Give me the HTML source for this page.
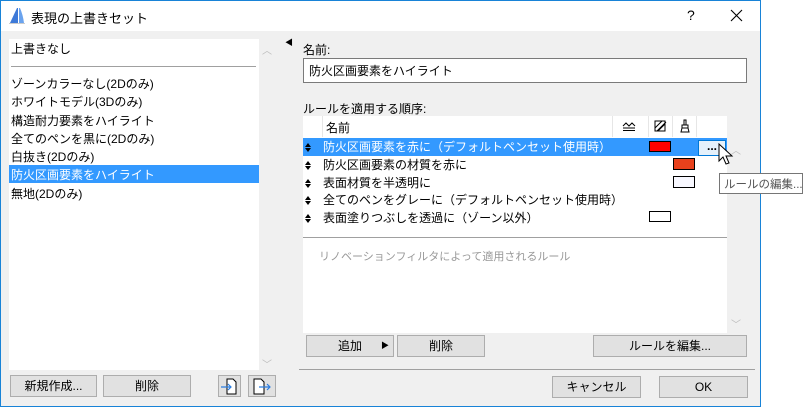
<!DOCTYPE html>
<html><head><meta charset="utf-8"><style>
*{margin:0;padding:0;box-sizing:border-box}
body{width:803px;height:408px;background:#fff;position:relative;overflow:hidden;font-family:"Liberation Sans","Noto Sans CJK JP",sans-serif;font-size:12px;color:#000}
.a{position:absolute}
.win{left:0;top:0;width:761px;height:407px;border:1px solid #1883d7;background:#f0f0f0}
.title{left:1px;top:1px;width:759px;height:30px;background:#fff}
.btn{position:absolute;background:#e1e1e1;border:1px solid #adadad;text-align:center;line-height:20px;font-size:12px}
.row{position:absolute;left:303px;width:424px;height:18px;line-height:18px}
.sw{position:absolute;width:22px;height:11px;border:1px solid #000}
.arr{position:absolute;left:2px;top:5px}
.vl{position:absolute;top:116px;width:1px;height:21px;background:#e6e6e6}
</style></head><body>
<div class="a win"></div>
<div class="a title"></div>
<svg class="a" style="left:9px;top:7px" width="16" height="17"><path d="M1 16 L8 1 L9 1 L9 16Z" fill="#3d79d8"/><path d="M10 1 L11 1 Q14 8 15 16 L10 16Z" fill="#6aa3ee"/><path d="M0 16.5H16" stroke="#ccc"/></svg>
<div class="a" style="left:31px;top:8px;font-size:13px">表現の上書きセット</div>
<div class="a" style="left:687px;top:7px;font-size:14px">?</div>
<svg class="a" style="left:730px;top:9px" width="13" height="13"><path d="M1 1L12 12M12 1L1 12" stroke="#000" stroke-width="1.1"/></svg>

<div class="a" style="left:9px;top:39px;width:250px;height:331px;background:#fff"></div>
<div class="a" style="left:11px;top:40px">上書きなし</div>
<div class="a" style="left:11px;top:66px;width:245px;height:1px;background:#a0a0a0"></div>
<div class="a" style="left:9px;top:165px;width:250px;height:18px;background:#3399ff"></div>
<div class="a" style="left:11px;top:75px;line-height:18.3px">ゾーンカラーなし(2Dのみ)<br>ホワイトモデル(3Dのみ)<br>構造耐力要素をハイライト<br>全てのペンを黒に(2Dのみ)<br>白抜き(2Dのみ)<br><span style="color:#fff">防火区画要素をハイライト</span><br>無地(2Dのみ)</div>
<div class="a" style="left:262px;top:42px;color:#bbb;font-size:10px">︿</div>
<div class="a" style="left:262px;top:356px;color:#bbb;font-size:10px">﹀</div>
<div class="btn" style="left:10px;top:375px;width:87px;height:22px">新規作成...</div>
<div class="btn" style="left:103px;top:375px;width:88px;height:22px">削除</div>
<div class="btn" style="left:218px;top:375px;width:23px;height:22px"><svg width="21" height="20"><path d="M8 3h6l3 3v12H8z" fill="#fff" stroke="#000"/><path d="M2 11h10M9 8l3 3-3 3" stroke="#2a7de1" fill="none" stroke-width="1.2"/></svg></div>
<div class="btn" style="left:248px;top:375px;width:28px;height:22px"><svg width="26" height="20"><path d="M5 3h7l3 3v12H5z" fill="#fff" stroke="#000"/><path d="M10 11h11M18 8l3 3-3 3" stroke="#2a7de1" fill="none" stroke-width="1.2"/></svg></div>
<div class="a" style="left:285px;top:37px;font-size:8px">◀</div>

<div class="a" style="left:303px;top:41px">名前:</div>
<div class="a" style="left:303px;top:58px;width:444px;height:25px;background:#fff;border:1px solid #7a7a7a;padding:3px 5px">防火区画要素をハイライト</div>
<div class="a" style="left:303px;top:100px">ルールを適用する順序:</div>
<div class="a" style="left:303px;top:116px;width:424px;height:217px;background:#fff"></div>
<div class="vl" style="left:322px"></div><div class="vl" style="left:612px"></div><div class="vl" style="left:648px"></div><div class="vl" style="left:672px"></div><div class="vl" style="left:696px"></div>
<div class="a" style="left:326px;top:119px">名前</div>
<svg class="a" style="left:622px;top:120px" width="14" height="12"><path d="M1 6l3-3 3 3 3-3 3 3M1 8h12M1 10.5h12" stroke="#000" fill="none"/></svg>
<svg class="a" style="left:654px;top:120px" width="13" height="12"><rect x="1" y="1" width="10" height="10" fill="none" stroke="#000"/><path d="M1 8l7-7M4 11l7-7M3 11l9-9" stroke="#000"/></svg>
<svg class="a" style="left:680px;top:119px" width="10" height="14"><path d="M4 1h2v5H4zM2 6h6v3H2zM2 9l-1 4h8l-1-4" fill="none" stroke="#000"/></svg>
<div class="a" style="left:303px;top:138px;width:424px;height:18px;background:#3399ff"></div>
<svg width="0" height="0" style="position:absolute"><defs><symbol id="ud" viewBox="0 0 6 9"><path d="M0 4L3 0L6 4ZM0 5L3 9L6 5Z" fill="#000"/></symbol></defs></svg>
<div class="row" style="top:138px;color:#fff"><svg class="arr" width="6" height="9"><use href="#ud"/></svg><span style="position:absolute;left:20px">防火区画要素を赤に（デフォルトペンセット使用時）</span></div>
<div class="row" style="top:156px"><svg class="arr" width="6" height="9"><use href="#ud"/></svg><span style="position:absolute;left:20px">防火区画要素の材質を赤に</span></div>
<div class="row" style="top:174px"><svg class="arr" width="6" height="9"><use href="#ud"/></svg><span style="position:absolute;left:20px">表面材質を半透明に</span></div>
<div class="row" style="top:191px"><svg class="arr" width="6" height="9"><use href="#ud"/></svg><span style="position:absolute;left:20px">全てのペンをグレーに（デフォルトペンセット使用時）</span></div>
<div class="row" style="top:209px"><svg class="arr" width="6" height="9"><use href="#ud"/></svg><span style="position:absolute;left:20px">表面塗りつぶしを透過に（ゾーン以外）</span></div>
<div class="sw" style="left:649px;top:141px;background:#f00"></div>
<div class="sw" style="left:673px;top:158px;background:#e8411c;height:12px"></div>
<div class="sw" style="left:673px;top:176px;background:#f8f8ff;height:12px"></div>
<div class="sw" style="left:649px;top:211px;background:#fff"></div>
<div class="a" style="left:698px;top:140px;width:28px;height:16px;background:#e5f1fb;border:1px solid #0078d7;text-align:center;line-height:10px;font-weight:bold">...</div>
<div class="a" style="left:303px;top:237px;width:424px;height:1px;background:#a0a0a0"></div>
<div class="a" style="left:319px;top:248px;color:#999;font-size:11px">リノベーションフィルタによって適用されるルール</div>
<div class="a" style="left:731px;top:142px;color:#bbb;font-size:10px">︿</div>
<div class="a" style="left:731px;top:316px;color:#bbb;font-size:10px">﹀</div>
<div class="a" style="left:719px;top:173px;width:84px;height:21px;background:#fff;border:1px solid #767676;color:#555;padding:2px 4px;white-space:nowrap;font-size:11.5px">ルールの編集...</div>
<svg class="a" style="left:718px;top:143px" width="16" height="24"><path d="M1 1v17l4-4 3 7 3-1-3-7h6z" fill="#fff" stroke="#000"/></svg>
<div class="btn" style="left:306px;top:335px;width:88px;height:22px">追加<span style="position:absolute;right:4px;font-size:8px">▶</span></div>
<div class="btn" style="left:397px;top:335px;width:88px;height:22px">削除</div>
<div class="btn" style="left:593px;top:335px;width:154px;height:22px">ルールを編集...</div>
<div class="a" style="left:299px;top:369px;width:456px;height:1px;background:#a0a0a0"></div>
<div class="btn" style="left:552px;top:376px;width:89px;height:22px">キャンセル</div>
<div class="btn" style="left:659px;top:376px;width:89px;height:22px">OK</div>
</body></html>
